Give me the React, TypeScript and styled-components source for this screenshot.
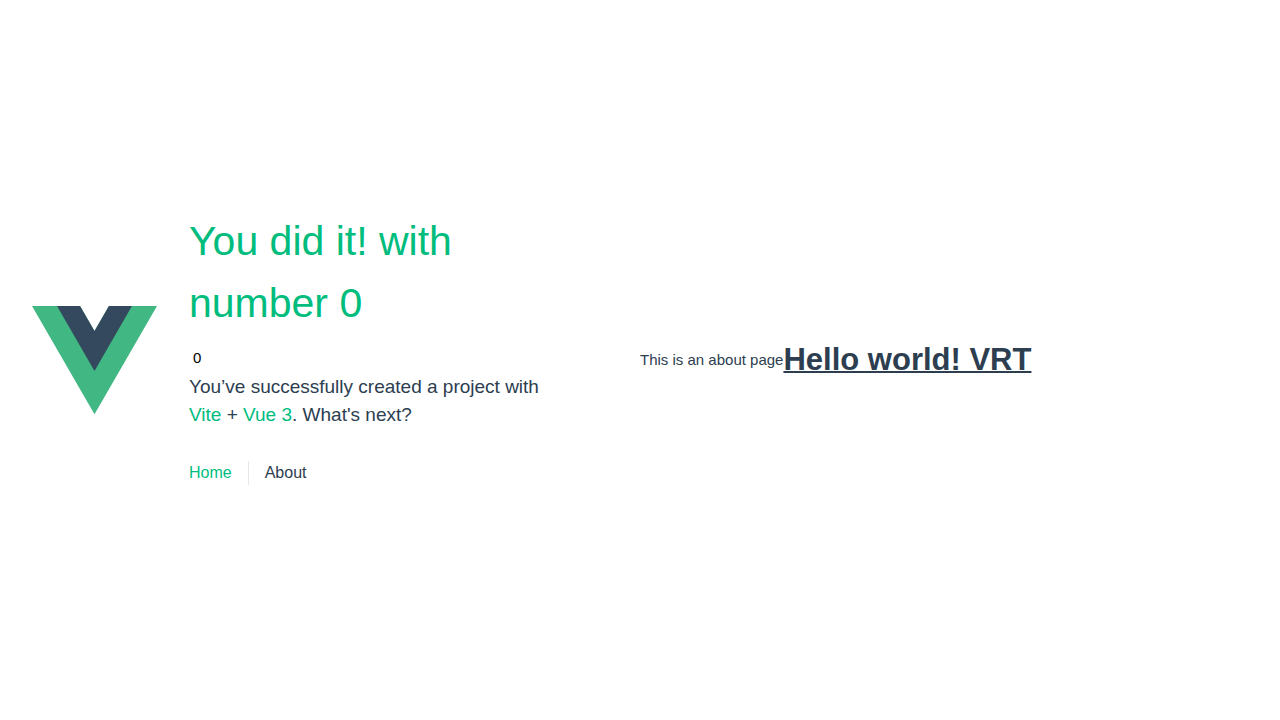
import React, { useState } from "react";
import styled, { createGlobalStyle } from "styled-components";

const GlobalStyle = createGlobalStyle`
  *, *::before, *::after {
    box-sizing: border-box;
    margin: 0;
    font-weight: normal;
  }
  body {
    min-height: 100vh;
    display: flex;
    align-items: center;
    background: #ffffff;
    color: #2c3e50;
    font-family: "Liberation Sans", Arial, sans-serif;
    font-size: 15px;
    line-height: 24px;
  }
  #root {
    width: 100%;
  }
`;

const Layout = styled.div`
  display: grid;
  grid-template-columns: 1fr 1fr;
  max-width: 1280px;
  margin: 0 auto;
  padding: 0 32px;
`;

const Header = styled.header`
  display: flex;
  align-items: center;
  padding-right: 80px;
`;

const Logo = styled.svg`
  flex: none;
  width: 125px;
  margin-right: 32px;
`;

const Title = styled.h1`
  color: #00bd7e;
  font-size: 41px;
  line-height: 62px;
`;

const Counter = styled.button`
  display: block;
  margin: 12px 0 3px;
  padding: 0 4px;
  border: 0;
  background: transparent;
  color: #000000;
  font: inherit;
  cursor: pointer;
`;

const Message = styled.h3`
  font-size: 19px;
  line-height: 28px;
`;

const Link = styled.a`
  color: #00bd7e;
  text-decoration: none;
`;

const Nav = styled.nav`
  display: flex;
  padding: 32px 0 25px;
  font-size: 16px;
`;

const NavLink = styled.a<{ $active?: boolean }>`
  padding: 0 16px;
  border-left: 1px solid rgba(60, 60, 60, 0.12);
  color: ${(p) => (p.$active ? "#00bd7e" : "#2c3e50")};
  text-decoration: none;

  &:first-of-type {
    padding-left: 0;
    border-left: 0;
  }
`;

const About = styled.main`
  display: flex;
  align-items: center;
`;

const Greeting = styled.h1`
  font-size: 31px;
  font-weight: bold;
  line-height: 52px;
  text-decoration: underline 2px;
`;

export default function App() {
  const [count, setCount] = useState(0);
  return (
    <>
      <GlobalStyle />
      <Layout>
        <Header>
          <Logo viewBox="0 0 261.76 226.69" role="img" aria-label="Vue logo">
            <path d="M161.096.001l-30.225 52.351L100.647.001H-.005l130.877 226.688L261.749.001z" fill="#41b883" />
            <path d="M161.096.001l-30.225 52.351L100.647.001H52.346l78.526 136.01L209.398.001z" fill="#34495e" />
          </Logo>
          <div>
            <Title>{`You did it! with number ${count}`}</Title>
            <Counter type="button" onClick={() => setCount(count + 1)}>{count}</Counter>
            <Message>
              You’ve successfully created a project with{" "}
              <Link href="https://vitejs.dev/">Vite</Link> +{" "}
              <Link href="https://vuejs.org/">Vue 3</Link>. What's next?
            </Message>
            <Nav>
              <NavLink href="#home" $active>Home</NavLink>
              <NavLink href="#about">About</NavLink>
            </Nav>
          </div>
        </Header>
        <About>
          <p>This is an about page</p>
          <Greeting>Hello world! VRT</Greeting>
        </About>
      </Layout>
    </>
  );
}
